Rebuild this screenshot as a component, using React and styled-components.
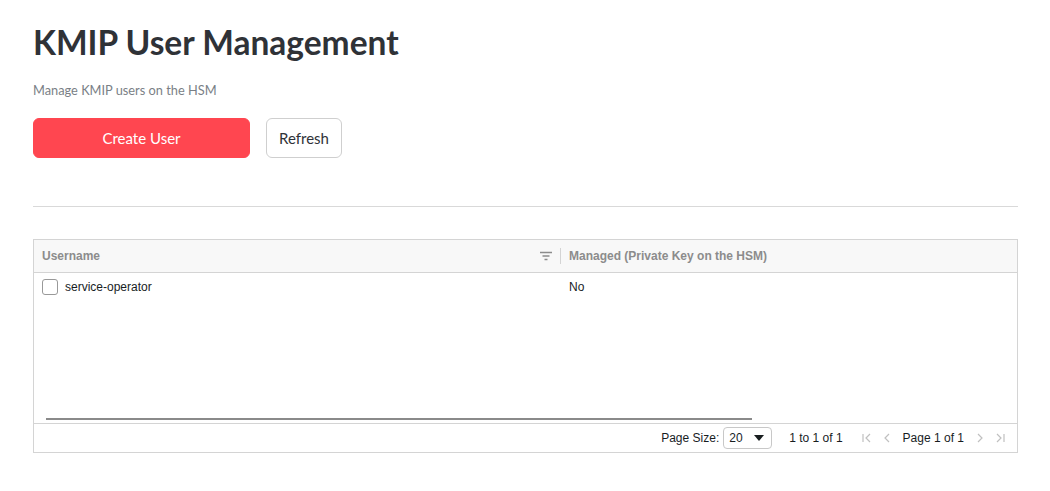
import React from "react";
import styled, { createGlobalStyle } from "styled-components";

const GlobalStyle = createGlobalStyle`
  body {
    margin: 0;
    background: #fff;
    font-family: "Lato", "Noto Sans", sans-serif;
    color: #333;
  }
`;

const Page = styled.div`
  padding: 21px 32px 0 33px;
`;

const Title = styled.h1`
  margin: 0;
  font-size: 33.5px;
  font-weight: 700;
  color: #2f3237;
  line-height: 42px;
`;

const Subtitle = styled.p`
  margin: 19px 0 0;
  font-size: 12.8px;
  color: #7a7f86;
  line-height: 16px;
`;

const Actions = styled.div`
  display: flex;
  gap: 16px;
  margin-top: 20px;
`;

const Button = styled.button`
  height: 40px;
  border-radius: 6px;
  font-family: inherit;
  font-size: 15px;
  cursor: pointer;
  width: ${p => p.$width};
  background: ${p => (p.$primary ? "#ff4650" : "#fff")};
  color: ${p => (p.$primary ? "#fff" : "#2f3237")};
  border: 1px solid ${p => (p.$primary ? "#ff4650" : "#cfcfcf")};
`;

const Divider = styled.hr`
  margin: 48px 0 32px;
  border: 0;
  border-top: 1px solid #d9d9d9;
`;

const Grid = styled.div`
  border: 1px solid #d4d4d4;
  font-family: "Liberation Sans", Arial, sans-serif;
  font-size: 12px;
  color: #181d1f;
  display: flex;
  flex-direction: column;
  height: 212px;
`;

const HeaderRow = styled.div`
  display: grid;
  grid-template-columns: 527px 1fr;
  height: 32px;
  background: #f8f8f8;
  border-bottom: 1px solid #d4d4d4;
`;

const HeaderCell = styled.div`
  display: flex;
  align-items: center;
  padding: 0 8px;
  font-weight: 700;
  color: #8c8c8c;
  position: relative;
`;

const HeaderLabel = styled.span`
  flex: 1;
`;

const Separator = styled.span`
  width: 1px;
  height: 16px;
  background: #d4d4d4;
  position: absolute;
  right: 0;
  top: 8px;
`;

const Body = styled.div`
  flex: 1;
  display: flex;
  flex-direction: column;
`;

const Row = styled.div`
  display: grid;
  grid-template-columns: 527px 1fr;
  height: 28px;
  align-items: center;
`;

const Cell = styled.div`
  display: flex;
  align-items: center;
  gap: 7px;
  padding: 0 8px;
`;

const Checkbox = styled.span`
  width: 14px;
  height: 14px;
  border: 1px solid #999;
  border-radius: 3px;
  background: #fff;
`;

const Filler = styled.div`
  flex: 1;
`;

const Scrollbar = styled.div`
  height: 2px;
  margin: 0 0 3px 12px;
  width: 706px;
  background: #8a8a8a;
`;

const Footer = styled.div`
  height: 28px;
  border-top: 1px solid #d4d4d4;
  display: flex;
  align-items: center;
  justify-content: flex-end;
  padding-right: 11px;
  color: #181d1f;
`;

const PageSize = styled.div`
  display: flex;
  align-items: center;
  gap: 4px;
`;

const Select = styled.div`
  width: 49px;
  height: 22px;
  box-sizing: border-box;
  border: 1px solid #c8c8c8;
  border-radius: 4px;
  display: flex;
  align-items: center;
  justify-content: space-between;
  padding: 0 7px 0 5px;
`;

const Summary = styled.span`
  margin-left: 17px;
`;

const Pager = styled.div`
  display: flex;
  align-items: center;
  gap: 8px;
  margin-left: 18px;
`;

const NavIcon = styled.svg`
  width: 12px;
  height: 12px;
  stroke: #c0c0c0;
  fill: none;
  stroke-width: 1.2;
`;

const PageLabel = styled.span`
  margin: 0 2px;
`;

const FilterIcon = () => (
  <svg width="14" height="12" viewBox="0 0 14 12">
    <path d="M1 2.5h12M3.5 6h7M5.5 9.5h3" stroke="#8c8c8c" strokeWidth="1.4" />
  </svg>
);

const Caret = () => (
  <svg width="10" height="6" viewBox="0 0 10 6">
    <path d="M0 0h10L5 6z" fill="#181d1f" />
  </svg>
);

export default function App() {
  return (
    <>
      <GlobalStyle />
      <Page>
        <Title>KMIP User Management</Title>
        <Subtitle>Manage KMIP users on the HSM</Subtitle>
        <Actions>
          <Button $primary $width="217px">Create User</Button>
          <Button $width="76px">Refresh</Button>
        </Actions>
        <Divider />
        <Grid>
          <HeaderRow>
            <HeaderCell>
              <HeaderLabel>Username</HeaderLabel>
              <FilterIcon />
              <Separator />
            </HeaderCell>
            <HeaderCell>
              <HeaderLabel>Managed (Private Key on the HSM)</HeaderLabel>
            </HeaderCell>
          </HeaderRow>
          <Body>
            <Row>
              <Cell>
                <Checkbox />
                service-operator
              </Cell>
              <Cell>No</Cell>
            </Row>
            <Filler />
            <Scrollbar />
          </Body>
          <Footer>
            <PageSize>
              Page Size:
              <Select>
                <span>20</span>
                <Caret />
              </Select>
            </PageSize>
            <Summary>1 to 1 of 1</Summary>
            <Pager>
              <NavIcon viewBox="0 0 12 12"><path d="M2 2v8M9 2L5 6l4 4" /></NavIcon>
              <NavIcon viewBox="0 0 12 12"><path d="M8 2L4 6l4 4" /></NavIcon>
              <PageLabel>Page 1 of 1</PageLabel>
              <NavIcon viewBox="0 0 12 12"><path d="M4 2l4 4-4 4" /></NavIcon>
              <NavIcon viewBox="0 0 12 12"><path d="M3 2l4 4-4 4M10 2v8" /></NavIcon>
            </Pager>
          </Footer>
        </Grid>
      </Page>
    </>
  );
}
